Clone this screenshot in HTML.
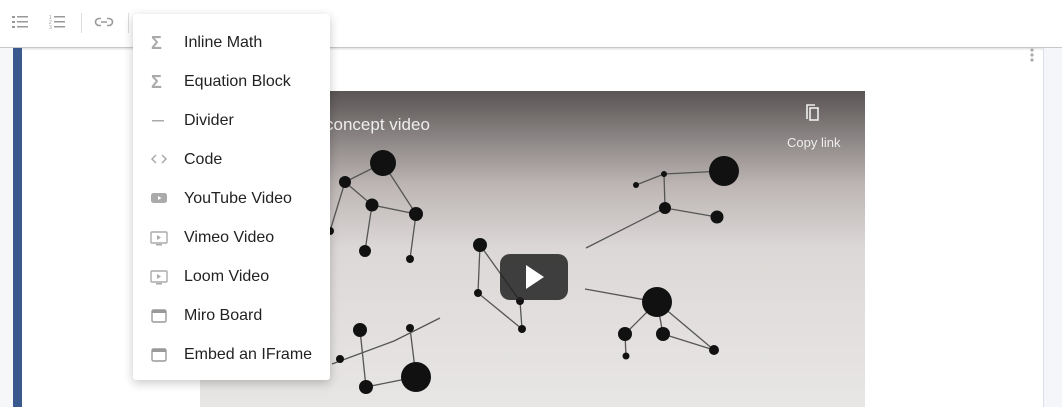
<!DOCTYPE html>
<html><head><style>
body{margin:0;width:1062px;height:407px;overflow:hidden;background:#fff;font-family:"Liberation Sans",sans-serif;position:relative}
.tb{position:absolute;left:0;top:0;width:1062px;height:47px;background:#fff;border-bottom:1px solid #c8c8c8;box-shadow:0 1px 2px rgba(0,0,0,.15)}
.left{position:absolute;left:0;top:48px;width:13px;height:359px;background:#f6f7f9}
.bar{position:absolute;left:13px;top:48px;width:9px;height:359px;background:#3a5a8f}
.right{position:absolute;left:1043px;top:48px;width:19px;height:359px;background:#f4f6f9;border-left:1px solid #dde}
.menu{position:absolute;left:133px;top:14px;width:197px;height:366px;background:#fff;border-radius:3px;box-shadow:0 3px 10px rgba(0,0,0,.22)}
.it{position:absolute;left:0;height:39px;width:197px}
.it span{position:absolute;left:51px;top:11px;font-size:16px;color:#222}
.it svg{position:absolute;left:17px;top:11px}
</style></head><body>
<div class="tb">
<svg width="340" height="47" style="position:absolute;left:0;top:0" fill="#999" stroke="none">
<rect x="12" y="16" width="3" height="2"/><rect x="12" y="21" width="3" height="2"/><rect x="12" y="26" width="3" height="2"/>
<rect x="17" y="16" width="11" height="1.5"/><rect x="17" y="21" width="11" height="1.5"/><rect x="17" y="26" width="11" height="1.5"/>
<text x="49" y="19" font-size="5" fill="#999">1</text><text x="49" y="24" font-size="5" fill="#999">2</text><text x="49" y="29" font-size="5" fill="#999">3</text>
<rect x="54" y="16" width="11" height="1.5"/><rect x="54" y="21" width="11" height="1.5"/><rect x="54" y="26" width="11" height="1.5"/>
<rect x="81" y="13" width="1" height="20" fill="#ddd"/>
<path d="M101 18.5h-2a3.5 3.5 0 0 0 0 7h2M107 18.5h2a3.5 3.5 0 0 1 0 7h-2M101 22h6" stroke="#999" stroke-width="1.6" fill="none"/>
<rect x="128" y="13" width="1" height="20" fill="#ddd"/>
</svg>
</div>
<div class="left"></div><div class="bar"></div><div class="right"></div>
<svg style="position:absolute;left:1029px;top:48px" width="8" height="14"><circle cx="3" cy="2" r="1.6" fill="#aaa"/><circle cx="3" cy="7" r="1.6" fill="#aaa"/><circle cx="3" cy="12" r="1.6" fill="#aaa"/></svg>
<svg style="position:absolute;left:200px;top:91px" width="665" height="316">
<defs><linearGradient id="g" x1="0" y1="0" x2="0" y2="1"><stop offset="0" stop-color="#5a5454"/><stop offset=".3" stop-color="#bdb6b5"/><stop offset=".5" stop-color="#dcd8d7"/><stop offset="1" stop-color="#e8e6e5"/></linearGradient></defs>
<rect width="665" height="316" fill="url(#g)"/>
<g stroke="#555" stroke-width="1.3" fill="none">
<path d="M183 72L145 91L172 114L165 160M183 72L216 123L210 168M172 114L216 123M145 91L130 140L111 175M436 94L464 83L524 80M464 83L465 117L517 126M465 117L386 157M280 154L278 202L322 238L320 210L280 154M385 198L457 211L514 259M457 211L425 243L426 265M457 211L463 243L514 259M240 227L194 250L132 273M160 239L166 296L216 286L210 237"/>
</g>
<g fill="#111">
<circle cx="183" cy="72" r="13"/><circle cx="145" cy="91" r="6"/><circle cx="172" cy="114" r="6.5"/><circle cx="216" cy="123" r="7"/><circle cx="165" cy="160" r="6"/><circle cx="210" cy="168" r="4"/><circle cx="130" cy="140" r="4"/>
<circle cx="524" cy="80" r="15"/><circle cx="464" cy="83" r="3"/><circle cx="436" cy="94" r="3"/><circle cx="465" cy="117" r="6"/><circle cx="517" cy="126" r="6.5"/>
<circle cx="280" cy="154" r="7"/><circle cx="278" cy="202" r="4"/><circle cx="322" cy="238" r="4"/><circle cx="320" cy="210" r="4"/>
<circle cx="457" cy="211" r="15"/><circle cx="425" cy="243" r="7"/><circle cx="463" cy="243" r="7"/><circle cx="514" cy="259" r="5"/><circle cx="426" cy="265" r="3.5"/>
<circle cx="160" cy="239" r="7"/><circle cx="216" cy="286" r="15"/><circle cx="166" cy="296" r="7"/><circle cx="210" cy="237" r="4"/><circle cx="140" cy="268" r="4"/>
</g>
<rect x="300" y="163" width="68" height="46" rx="10" fill="#222" opacity=".85"/>
<path d="M326 174l18 12l-18 12z" fill="#fff"/>
<text x="125" y="39" font-size="17" fill="#eee">concept video</text>
<path d="M607 28v-14h8" stroke="#eee" stroke-width="1.6" fill="none"/>
<rect x="610" y="17" width="8" height="12" stroke="#eee" stroke-width="1.6" fill="none"/>
<text x="587" y="56" font-size="13" fill="#eee">Copy link</text>
</svg>
<div class="menu">
<div class="it" style="top:9px"><svg width="18" height="18"><text x="1" y="15" font-size="18" fill="#aaa" font-weight="bold">Σ</text></svg><span>Inline Math</span></div>
<div class="it" style="top:48px"><svg width="18" height="18"><text x="1" y="15" font-size="18" fill="#aaa" font-weight="bold">Σ</text></svg><span>Equation Block</span></div>
<div class="it" style="top:87px"><svg width="16" height="16"><rect x="2" y="8" width="12" height="1.5" fill="#aaa"/></svg><span>Divider</span></div>
<div class="it" style="top:126px"><svg width="18" height="16"><path d="M6 4l-4 4l4 4M12 4l4 4l-4 4" stroke="#aaa" stroke-width="1.5" fill="none"/></svg><span>Code</span></div>
<div class="it" style="top:165px"><svg width="18" height="16"><rect x="1" y="3" width="16" height="10" rx="2.5" fill="#aaa"/><path d="M8 6l3.5 2l-3.5 2z" fill="#fff"/></svg><span>YouTube Video</span></div>
<div class="it" style="top:204px"><svg width="18" height="18"><rect x="1" y="3" width="16" height="11" rx="1" stroke="#aaa" stroke-width="1.4" fill="none"/><path d="M7 6l4 2.5l-4 2.5z" fill="#aaa"/><rect x="6" y="15" width="6" height="1.5" fill="#aaa"/></svg><span>Vimeo Video</span></div>
<div class="it" style="top:243px"><svg width="18" height="18"><rect x="1" y="3" width="16" height="11" rx="1" stroke="#aaa" stroke-width="1.4" fill="none"/><path d="M7 6l4 2.5l-4 2.5z" fill="#aaa"/><rect x="6" y="15" width="6" height="1.5" fill="#aaa"/></svg><span>Loom Video</span></div>
<div class="it" style="top:282px"><svg width="18" height="18"><rect x="2" y="3" width="14" height="12" rx="1.5" stroke="#999" stroke-width="1.4" fill="none"/><rect x="2" y="3" width="14" height="3" fill="#999"/></svg><span>Miro Board</span></div>
<div class="it" style="top:321px"><svg width="18" height="18"><rect x="2" y="3" width="14" height="12" rx="1.5" stroke="#999" stroke-width="1.4" fill="none"/><rect x="2" y="3" width="14" height="3" fill="#999"/></svg><span>Embed an IFrame</span></div>
</div>
</body></html>
